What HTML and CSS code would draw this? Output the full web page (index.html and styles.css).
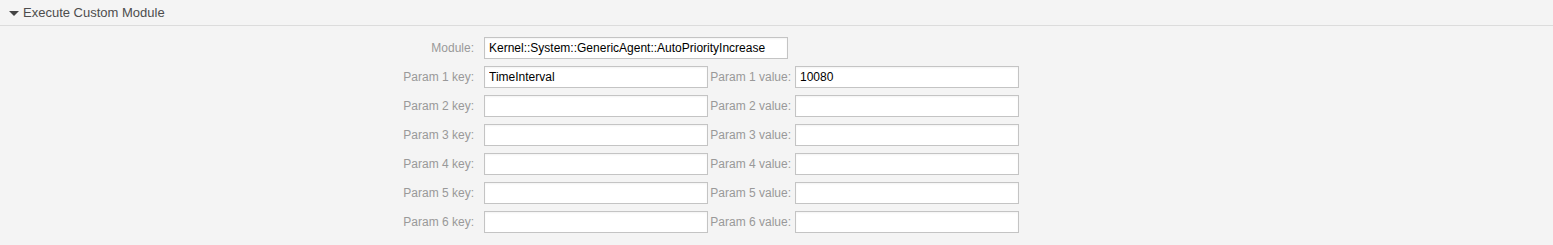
FILE: index.html
```html
<!DOCTYPE html>
<html>
<head>
<meta charset="utf-8">
<link rel="stylesheet" href="styles.css">
</head>
<body>
<div class="widget">
  <div class="header">
    <span class="toggle"></span>
    <span class="title">Execute Custom Module</span>
  </div>
  <div class="content">
    <div class="row">
      <label class="lbl">Module:</label>
      <input class="field wide" type="text" value="Kernel::System::GenericAgent::AutoPriorityIncrease">
    </div>
    <div class="row">
      <label class="lbl">Param 1 key:</label>
      <input class="field" type="text" value="TimeInterval">
      <label class="vlbl">Param 1 value:</label>
      <input class="field" type="text" value="10080">
    </div>
    <div class="row">
      <label class="lbl">Param 2 key:</label>
      <input class="field" type="text" value="">
      <label class="vlbl">Param 2 value:</label>
      <input class="field" type="text" value="">
    </div>
    <div class="row">
      <label class="lbl">Param 3 key:</label>
      <input class="field" type="text" value="">
      <label class="vlbl">Param 3 value:</label>
      <input class="field" type="text" value="">
    </div>
    <div class="row">
      <label class="lbl">Param 4 key:</label>
      <input class="field" type="text" value="">
      <label class="vlbl">Param 4 value:</label>
      <input class="field" type="text" value="">
    </div>
    <div class="row">
      <label class="lbl">Param 5 key:</label>
      <input class="field" type="text" value="">
      <label class="vlbl">Param 5 value:</label>
      <input class="field" type="text" value="">
    </div>
    <div class="row">
      <label class="lbl">Param 6 key:</label>
      <input class="field" type="text" value="">
      <label class="vlbl">Param 6 value:</label>
      <input class="field" type="text" value="">
    </div>
  </div>
</div>
</body>
</html>
```
FILE: styles.css
```css
html, body {
  margin: 0;
  padding: 0;
  background: #f4f4f4;
  font-family: "Liberation Sans", Arial, sans-serif;
}
.widget {
  background: #f4f4f4;
}
.header {
  height: 25px;
  border-bottom: 1px solid #dcdcdc;
  display: flex;
  align-items: center;
  padding-left: 9px;
  box-sizing: content-box;
}
.toggle {
  width: 0;
  height: 0;
  border-left: 5px solid transparent;
  border-right: 5px solid transparent;
  border-top: 5px solid #444;
  margin-right: 4px;
  margin-top: 1px;
}
.title {
  font-size: 13px;
  color: #4d4d4d;
}
.content {
  padding-top: 11px;
  display: flex;
  flex-direction: column;
  gap: 7px;
  padding-bottom: 12px;
}
.row {
  display: flex;
  align-items: center;
  height: 22px;
}
.lbl {
  width: 474px;
  text-align: right;
  font-size: 12px;
  color: #999;
  margin-right: 10px;
}
.vlbl {
  width: 83px;
  text-align: right;
  font-size: 12px;
  color: #999;
  margin-right: 4px;
}
.field {
  box-sizing: border-box;
  width: 224px;
  height: 22px;
  margin: 0;
  border: 1px solid #c4c4c4;
  background: #fff;
  box-shadow: inset 0 1px 2px rgba(0,0,0,0.05);
  padding: 0 4px;
  font-family: "Liberation Sans", Arial, sans-serif;
  font-size: 12px;
  color: #000;
  outline: none;
}
.field.wide {
  width: 304px;
}
```
